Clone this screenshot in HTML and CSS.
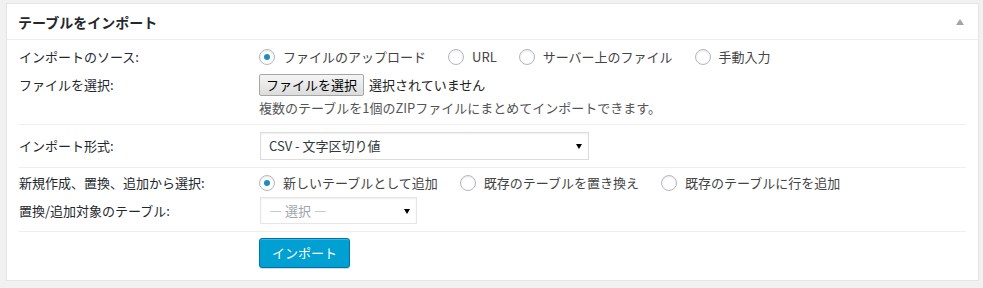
FILE: index.html
```html
<!DOCTYPE html>
<html lang="ja">
<head>
  <meta charset="UTF-8">
  <title>テーブルをインポート</title>
  <link rel="stylesheet" href="styles.css">
</head>
<body>
  <div class="postbox">
    <div class="hndle">
      <h2>テーブルをインポート</h2>
      <span class="toggle"></span>
    </div>
    <div class="inside">
      <div class="group g1">
        <div class="row">
          <div class="label">インポートのソース:</div>
          <div class="field">
            <label class="opt"><span class="radio checked"></span>ファイルのアップロード</label>
            <label class="opt"><span class="radio"></span>URL</label>
            <label class="opt"><span class="radio"></span>サーバー上のファイル</label>
            <label class="opt"><span class="radio"></span>手動入力</label>
          </div>
        </div>
        <div class="row row-file">
          <div class="label">ファイルを選択:</div>
          <div class="field">
            <button class="file-btn" type="button">ファイルを選択</button>
            <span class="file-name">選択されていません</span>
          </div>
        </div>
        <div class="row row-desc">
          <div class="label"></div>
          <div class="field desc">複数のテーブルを1個のZIPファイルにまとめてインポートできます。</div>
        </div>
      </div>

      <div class="group g2">
        <div class="row">
          <div class="label">インポート形式:</div>
          <div class="field">
            <div class="select wide">CSV - 文字区切り値</div>
          </div>
        </div>
      </div>

      <div class="group g3">
        <div class="row">
          <div class="label">新規作成、置換、追加から選択:</div>
          <div class="field">
            <label class="opt"><span class="radio checked"></span>新しいテーブルとして追加</label>
            <label class="opt"><span class="radio"></span>既存のテーブルを置き換え</label>
            <label class="opt"><span class="radio"></span>既存のテーブルに行を追加</label>
          </div>
        </div>
        <div class="row row-target">
          <div class="label">置換/追加対象のテーブル:</div>
          <div class="field">
            <div class="select narrow disabled">— 選択 —</div>
          </div>
        </div>
      </div>

      <div class="group g4">
        <div class="row">
          <div class="label"></div>
          <div class="field">
            <button class="button-primary" type="button">インポート</button>
          </div>
        </div>
      </div>
    </div>
  </div>
</body>
</html>
```

FILE: styles.css
```css
body {
  margin: 0;
  padding: 3px 4px 0 6px;
  background: #f1f1f1;
  font-family: "Noto Sans CJK JP", "Noto Sans", sans-serif;
  font-size: 13px;
  color: #444;
}

.postbox {
  background: #fff;
  border: 1px solid #e5e5e5;
  box-shadow: 0 1px 1px rgba(0,0,0,0.04);
}

.hndle {
  height: 35px;
  padding: 0 14px 0 11px;
  border-bottom: 1px solid #eee;
  display: flex;
  align-items: center;
  justify-content: space-between;
}

.hndle h2 {
  margin: 0;
  font-size: 14px;
  font-weight: bold;
  color: #23282d;
  line-height: 20px;
}

.toggle {
  width: 0;
  height: 0;
  border-left: 4px solid transparent;
  border-right: 4px solid transparent;
  border-bottom: 6px solid #a0a5aa;
}

.inside {
  padding: 0 12px;
}

.group {
  border-bottom: 1px solid #eee;
}

.group:last-child {
  border-bottom: none;
}

.g1 { padding: 6px 0; }
.g2 { padding: 7px 0; }
.g3 { padding: 4px 0 7px; }
.g4 { padding: 6px 0 12px; }

.row {
  display: grid;
  grid-template-columns: 240px 1fr;
  align-items: center;
  min-height: 22px;
  line-height: 20px;
}

.row-file { margin-top: 6px; }
.row-desc { margin-top: 2px; min-height: 20px; }
.row-target { margin-top: 3px; }

.label {
  color: #23282d;
}

.field {
  display: flex;
  align-items: center;
}

.opt {
  display: flex;
  align-items: center;
  margin-right: 22px;
  color: #444;
}

.radio {
  width: 14px;
  height: 14px;
  border: 1px solid #b4b9be;
  border-radius: 50%;
  box-shadow: inset 0 1px 2px rgba(0,0,0,0.1);
  margin-right: 8px;
  display: flex;
  align-items: center;
  justify-content: center;
}

.radio.checked::before {
  content: "";
  width: 6px;
  height: 6px;
  border-radius: 50%;
  background: #1e8cbe;
}

.file-btn {
  height: 22px;
  padding: 0 6px;
  font: inherit;
  line-height: 18px;
  color: #000;
  background: linear-gradient(#f5f5f5, #dcdcdc);
  border: 1px solid #a6a6a6;
  border-radius: 2px;
}

.file-name {
  margin-left: 5px;
  color: #222;
}

.desc {
  color: #555;
}

.select {
  position: relative;
  height: 28px;
  box-sizing: border-box;
  border: 1px solid #ddd;
  box-shadow: inset 0 1px 2px rgba(0,0,0,0.07);
  padding: 0 8px;
  display: flex;
  align-items: center;
  color: #32373c;
  background: #fff;
}

.select::after {
  content: "";
  position: absolute;
  right: 6px;
  top: 50%;
  margin-top: -2px;
  border-left: 3px solid transparent;
  border-right: 3px solid transparent;
  border-top: 5px solid #000;
}

.select.wide {
  width: 329px;
  margin-left: 1px;
}

.select.narrow {
  width: 157px;
  height: 27px;
  margin-left: 1px;
}

.select.disabled {
  color: #a0a5aa;
  border-color: #e5e5e5;
}

.button-primary {
  height: 30px;
  padding: 0 12px;
  font: inherit;
  line-height: 28px;
  color: #fff;
  background: #00a0d2;
  border: 1px solid #0073aa;
  border-radius: 3px;
  box-shadow: inset 0 1px 0 rgba(120,200,230,0.5), 0 1px 0 rgba(0,0,0,0.15);
}
```
